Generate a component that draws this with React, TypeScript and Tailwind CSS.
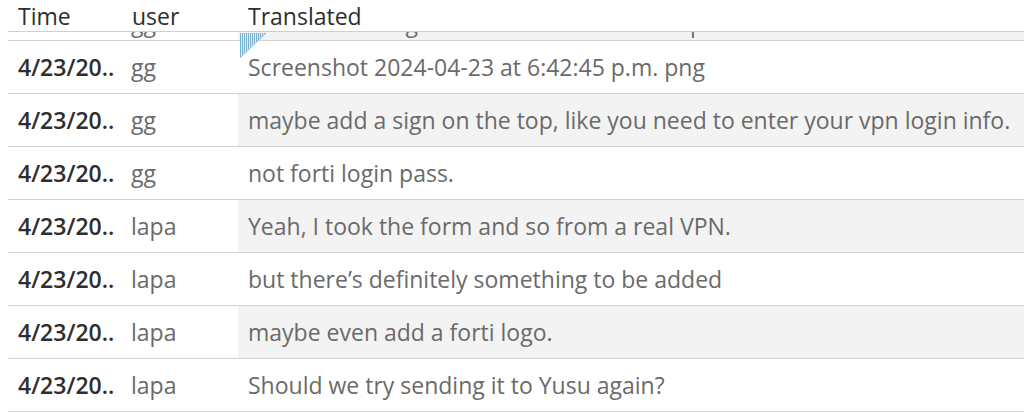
import React from "react";

const rows = [
  { t: "4/23/20..", u: "gg", m: "So let me change the text to match the top of the site" },
  { t: "4/23/20..", u: "gg", m: "Screenshot 2024-04-23 at 6:42:45 p.m. png" },
  { t: "4/23/20..", u: "gg", m: "maybe add a sign on the top, like you need to enter your vpn login info." },
  { t: "4/23/20..", u: "gg", m: "not forti login pass." },
  { t: "4/23/20..", u: "lapa", m: "Yeah, I took the form and so from a real VPN." },
  { t: "4/23/20..", u: "lapa", m: "but there\u2019s definitely something to be added" },
  { t: "4/23/20..", u: "lapa", m: "maybe even add a forti logo." },
  { t: "4/23/20..", u: "lapa", m: "Should we try sending it to Yusu again?" },
];

export default function App() {
  return (
    <div className="relative w-[1024px] h-[412px] overflow-hidden bg-white font-['Open_Sans',sans-serif]">
      <div className="relative z-10 ml-[8px] flex h-[32px] items-center border-b border-[#cfcfcf] bg-white pt-[1px] text-[23px] text-[#2e2e2e] leading-none">
        <div className="w-[120px] pl-[10px]">Time</div>
        <div className="w-[110px] pl-[4px]">user</div>
        <div className="flex-1 pl-[10px] font-medium">Translated</div>
      </div>
      <div className="h-[380px] overflow-hidden">
        <div className="-mt-[44px]">
          {rows.map((r, i) => {
            const align = i === 0 ? "items-end pb-[5px]" : "items-center";
            return (
              <div key={i} className="ml-[8px] flex h-[53px] border-b border-[#d3d3d3] text-[23px] leading-none">
                <div className={`flex w-[120px] pl-[10px] font-semibold text-[#2e2e2e] ${align}`}>{r.t}</div>
                <div className={`flex w-[110px] pl-[3px] text-[#6a6a6a] ${align}`}>{r.u}</div>
                <div className={`flex flex-1 whitespace-nowrap pl-[10px] text-[#6a6a6a] ${align} ${i % 2 === 0 ? "bg-[#f3f3f3]" : "bg-white"}`}>{r.m}</div>
              </div>
            );
          })}
        </div>
      </div>
      <svg className="absolute left-[240px] top-[33px] z-20" width="28" height="28" viewBox="0 0 28 28">
        <defs>
          <pattern id="hatch" width="2" height="2" patternUnits="userSpaceOnUse">
            <rect width="2" height="2" fill="#e0edf8" />
            <rect width="1" height="2" fill="#78aed8" />
          </pattern>
        </defs>
        <polygon points="0,0 26,0 0,25" fill="url(#hatch)" />
        <line x1="26" y1="0" x2="0" y2="25" stroke="#9cc4e4" strokeWidth="1" />
      </svg>
    </div>
  );
}
